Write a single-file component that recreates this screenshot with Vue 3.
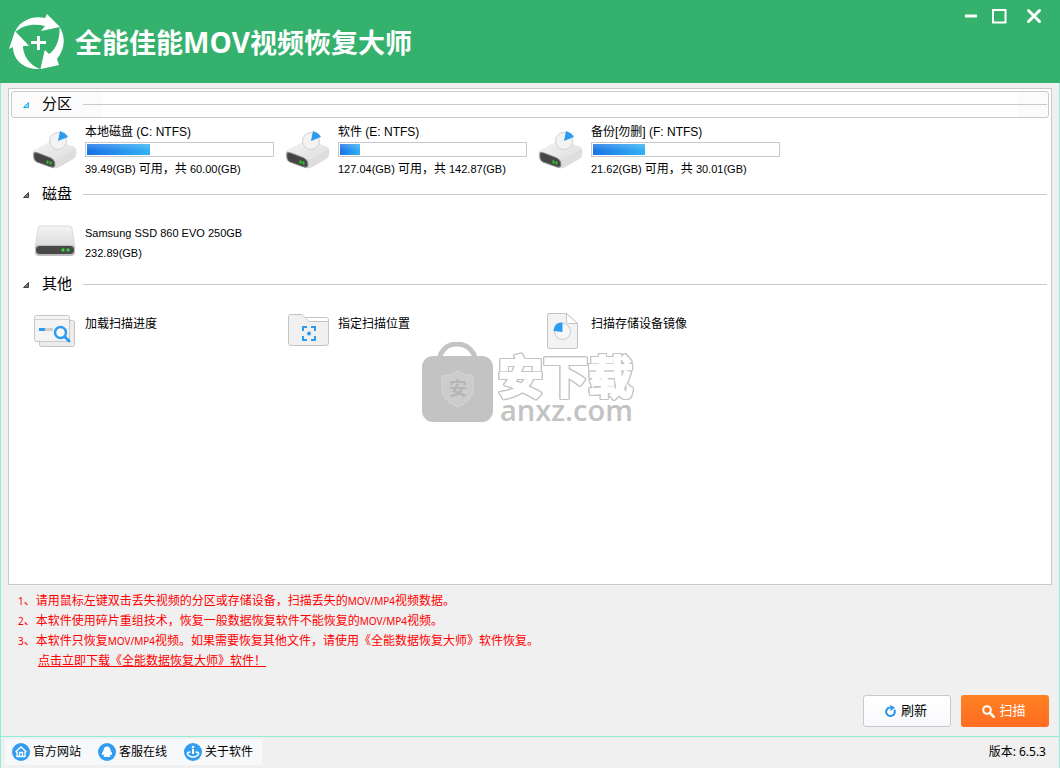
<script setup>
import { reactive } from 'vue'

const open = reactive({ partitions: true, disks: true, others: true })

const partitions = [
  { name: '本地磁盘', label: '(C: NTFS)', free: 39.49, total: 60 },
  { name: '软件', label: '(E: NTFS)', free: 127.04, total: 142.87 },
  { name: '备份[勿删]', label: '(F: NTFS)', free: 21.62, total: 30.01 },
]

const used = (p) => ((p.total - p.free) / p.total) * 100
</script>

<template>
  <div class="window">
    <header class="titlebar">
      <svg class="logo" viewBox="0 0 56 58" aria-hidden="true">
        <g fill="#fff">
          <path d="M6 19C10 9 22 2 36 5L38 1L51 14L32 18L36 13C25 10 14 12 6 19Z" />
          <path d="M50.500 14C57 24 56 36 48 46L50 52L32 56L36 37L40 41C47 36 51 27 50.500 14Z" />
          <path d="M31 56C14 57 4 46 4 34L0 36L6 18L20 33L14 33C14 42 20 52 31 56Z" />
          <path d="M28 23h3v5h6v3h-6v6h-3v-6h-6v-3h6z" />
        </g>
        <path d="M6 19L18 31M36 38L32 56" fill="none" stroke="#fff" />
      </svg>
      <h1>全能佳能<span>MOV</span>视频恢复大师</h1>
      <div class="controls">
        <button type="button" aria-label="最小化">
          <svg width="16" height="16" viewBox="0 0 16 16"><path d="M2 8h12" stroke="#fff" stroke-width="3" /></svg>
        </button>
        <button type="button" aria-label="最大化">
          <svg width="16" height="16" viewBox="0 0 16 16"><path d="M2 2h12.500v12.500h-12.500z" fill="none" stroke="#fff" stroke-width="2" /></svg>
        </button>
        <button type="button" class="close" aria-label="关闭">
          <svg width="16" height="16" viewBox="0 0 16 16"><path d="M2.500 2.500l11 11M13.500 2.500l-11 11" stroke="#fff" stroke-width="3" stroke-linecap="round" /></svg>
        </button>
      </div>
    </header>

    <main>
      <div class="panel">
        <section>
          <button type="button" class="group active" :aria-expanded="open.partitions" @click="open.partitions = !open.partitions">
            <svg class="tri" viewBox="0 0 8 8"><path d="M6.500 1.500v5h-5z" fill="#8fdcf8" stroke="#19b5ea" /></svg>
            <span>分区</span><i></i>
          </button>
          <div v-show="open.partitions" class="items">
            <button v-for="p in partitions" :key="p.label" type="button" class="item">
              <svg class="icon" viewBox="0 0 46 40" aria-hidden="true">
                <defs>
                  <linearGradient id="top" x1="0" y1="0" x2="1" y2="1"><stop offset="0" stop-color="#f5f5f5" /><stop offset="1" stop-color="#dcdcdc" /></linearGradient>
                </defs>
                <path d="M1 24Q0 22 3 20L20 11Q22 10 25 11L42 17Q45 19 44 24Q44 27 41 29L27 37Q24 39 21 38L4 32Q1 31 1 24Z" fill="#d0d0d0" />
                <path d="M3 20L20 11Q22 10 25 11L42 17Q45 19 42 21L26 30Q23 32 20 30L5 24Q1 22 3 20Z" fill="url(#top)" />
                <path d="M24 31L44 20Q45 26 41 29L27 37Q24 38 22 38Z" fill="#dedede" />
                <path d="M2 23Q3 22 6 23L19 28Q23 30 23 35Q23 38 19 37L5 32Q1 30 2 23Z" fill="#454545" stroke="#888" />
                <path d="M15.500 30.500v3M18.500 31.500v3" stroke="#2ecc28" stroke-width="2" />
                <circle cx="26" cy="11" r="8.500" fill="#f3f3f3" stroke="#d2d2d2" />
                <path d="M26 11L28 1Q34 3 36 7Z" fill="#2d9cf0" />
              </svg>
              <span class="info">
                <span class="name">{{ p.name }} {{ p.label }}</span>
                <span class="bar" role="progressbar" :aria-label="p.label" :aria-valuenow="Math.round(used(p))">
                  <span class="fill" :style="{ width: used(p) + '%' }"></span>
                </span>
                <span class="size">{{ p.free.toFixed(2) }}(GB) <b>可用，共</b> {{ p.total.toFixed(2) }}(GB)</span>
              </span>
            </button>
          </div>
        </section>

        <section>
          <button type="button" class="group" :aria-expanded="open.disks" @click="open.disks = !open.disks">
            <svg class="tri" viewBox="0 0 8 8"><path d="M6.500 1.500v5h-5z" fill="#777" stroke="#444" /></svg>
            <span>磁盘</span><i></i>
          </button>
          <div v-show="open.disks" class="items">
            <button type="button" class="item disk">
              <svg class="icon" viewBox="0 0 46 40" aria-hidden="true">
                <defs>
                  <linearGradient id="lid" x1="0" y1="0" x2="0" y2="1"><stop offset="0" stop-color="#f4f4f4" /><stop offset="1" stop-color="#d9d9d9" /></linearGradient>
                </defs>
                <path d="M6 8Q6 5 9 5H37Q40 5 40 8L43 27H3Z" fill="url(#lid)" stroke="#dadada" />
                <rect x="3" y="24" width="40" height="11" rx="4" fill="#bcbcbc" />
                <rect x="4" y="25" width="38" height="8" rx="4" fill="#484848" />
                <circle cx="31" cy="29" r="1.700" fill="#34d234" /><circle cx="36" cy="29" r="1.700" fill="#34d234" />
              </svg>
              <span class="info">
                <span class="size">Samsung SSD 860 EVO 250GB</span>
                <span class="size">232.89(GB)</span>
              </span>
            </button>
          </div>
        </section>

        <section>
          <button type="button" class="group" :aria-expanded="open.others" @click="open.others = !open.others">
            <svg class="tri" viewBox="0 0 8 8"><path d="M6.500 1.500v5h-5z" fill="#777" stroke="#444" /></svg>
            <span>其他</span><i></i>
          </button>
          <div v-show="open.others" class="items">
            <button type="button" class="item other">
              <svg class="icon" viewBox="0 0 46 40" aria-hidden="true">
                <rect x="7.500" y="9.500" width="35" height="26" rx="2" fill="#ececec" stroke="#c4c4c4" />
                <rect x="2.500" y="4.500" width="35" height="26" rx="2" fill="#f4f4f4" stroke="#c8c8c8" />
                <path d="M3 8.500h34" stroke="#d4d4d4" />
                <path d="M7 18.500h6" stroke="#2d9cf0" stroke-width="3" /><path d="M13 18.500h8" stroke="#cfcfcf" stroke-width="3" />
                <circle cx="28.500" cy="21.500" r="5.500" fill="#f8f8f8" stroke="#2d9cf0" stroke-width="2.500" />
                <path d="M33 26l4 4" stroke="#2d9cf0" stroke-width="3" stroke-linecap="round" />
              </svg>
              <span class="name">加载扫描进度</span>
            </button>
            <button type="button" class="item other">
              <svg class="icon" viewBox="0 0 46 40" aria-hidden="true">
                <path d="M3.500 6Q3.500 3.500 6 3.500H17L24 10.500H43.500V32Q43.500 34.500 41 34.500H6Q3.500 34.500 3.500 32Z" fill="#f0f0f0" stroke="#c4c4c4" />
                <path d="M20 6.500H41.500Q43.500 6.500 43.500 9V11" fill="none" stroke="#c4c4c4" />
                <path d="M18 20v-4h4M26 16h4v4M30 25v4h-4M22 29h-4v-4" fill="none" stroke="#2d9cf0" stroke-width="2" />
                <circle cx="24" cy="22.500" r="2" fill="#2d9cf0" />
              </svg>
              <span class="name">指定扫描位置</span>
            </button>
            <button type="button" class="item other">
              <svg class="icon" viewBox="0 0 46 40" aria-hidden="true">
                <path d="M9.500 4Q9.500 2.500 11 2.500H28.500L39.500 12.500V35.500Q39.500 37.500 37.500 37.500H11Q9.500 37.500 9.500 36Z" fill="#f2f2f2" stroke="#c4c4c4" />
                <path d="M28.500 2.500V10.500Q28.500 12.500 30.500 12.500H39.500Z" fill="#fff" stroke="#c4c4c4" />
                <circle cx="24.500" cy="20.500" r="8" fill="#f7f7f7" stroke="#cacaca" />
                <path d="M24.500 21V11.500Q16 11 15.500 20Z" fill="#2d9cf0" />
              </svg>
              <span class="name">扫描存储设备镜像</span>
            </button>
          </div>
        </section>

        <div class="watermark">
          <svg class="bag" viewBox="0 0 72 80" aria-hidden="true">
            <path d="M17 17C20 6 27 2 35 2S50 6 54 17" fill="none" stroke="#c3c3c3" stroke-width="5" />
            <rect x="0" y="14" width="71" height="66" rx="11" fill="#c3c3c3" />
            <path d="M36 29Q43 34 51 34V47Q51 58 36 65Q20 58 20 47V34Q28 34 36 29Z" fill="#cccccb" stroke="#d6d6d5" />
            <text x="36" y="53" text-anchor="middle" font-size="18" font-weight="700" font-family="Noto Sans CJK SC, sans-serif" fill="#b5b5b5">安</text>
          </svg>
          <span class="words"><strong>安下载</strong><em>anxz.com</em></span>
        </div>
      </div>

      <div class="notes">
        <p><small>1</small>、请用鼠标左键双击丢失视频的分区或存储设备，扫描丢失的<small>MOV/MP4</small>视频数据。</p>
        <p><small>2</small>、本软件使用碎片重组技术，恢复一般数据恢复软件不能恢复的<small>MOV/MP4</small>视频。</p>
        <p><small>3</small>、本软件只恢复<small>MOV/MP4</small>视频。如果需要恢复其他文件，请使用《全能数据恢复大师》软件恢复。</p>
        <a href="#download">点击立即下载《全能数据恢复大师》软件！</a>
      </div>

      <div class="actions">
        <button type="button" class="btn">
          <svg width="12" height="12" viewBox="0 0 12 12"><path d="M8.500 3.500A4.300 4.300 0 1 1 3.500 3.200" fill="none" stroke="#2b93ea" stroke-width="2" transform="rotate(22 6 6)" /><path d="M5 0L10 2.500L5.500 6Z" fill="#2b93ea" /></svg>
          刷新
        </button>
        <button type="button" class="btn primary">
          <svg width="13" height="13" viewBox="0 0 13 13"><circle cx="5" cy="5" r="3.800" fill="none" stroke="#fff" stroke-width="2" /><path d="M8 8l3.800 3.800" stroke="#fff" stroke-width="2.500" stroke-linecap="round" /></svg>
          扫描
        </button>
      </div>
    </main>

    <footer>
      <nav>
        <a href="#site">
          <svg width="18" height="18" viewBox="0 0 18 18"><circle cx="9" cy="9" r="9" fill="#329cf1" /><path d="M3.500 9L9 4l5.500 5M5 8.500V13.500H13V8.500M7.500 13.500V9.500h3V13.500" fill="none" stroke="#fff" stroke-width="1.300" /></svg>
          官方网站
        </a>
        <a href="#service">
          <svg width="18" height="18" viewBox="0 0 18 18"><circle cx="9" cy="9" r="9" fill="#329cf1" /><path d="M9 3.500C6.500 3.500 5.500 5.500 5.500 7.500C4.500 9 3.500 10.500 4 12L5.500 11.500L6.200 12.500L5.500 14H8.500L9 13.500L9.500 14H12.500L11.800 12.500L12.500 11.500L14 12C14.500 10.500 13.500 9 12.500 7.500C12.500 5.500 11.500 3.500 9 3.500Z" fill="#fff" /></svg>
          客服在线
        </a>
        <a href="#about">
          <svg width="18" height="18" viewBox="0 0 18 18"><circle cx="9" cy="9" r="9" fill="#329cf1" /><circle cx="9" cy="4" r="1.300" fill="#fff" /><path d="M9 6v5" stroke="#fff" stroke-width="2" /><path d="M6.500 9Q3 9 3.500 11Q5 14 9 14T14.500 11Q15 9 11.500 9" fill="none" stroke="#fff" stroke-width="1.600" /></svg>
          关于软件
        </a>
      </nav>
      <span>版本: 6.5.3</span>
    </footer>
  </div>
</template>

<style>
body {
  margin: 0;
  background: #f0f0f0;
}
</style>

<style scoped>
* {
  box-sizing: border-box;
}
.window {
  display: flex;
  flex-direction: column;
  min-height: 100vh;
  font: 12px/20px "Liberation Sans", "Noto Sans CJK SC", sans-serif;
  color: #000;
  background: #f0f0f0;
}
button {
  font: inherit;
  color: inherit;
  padding: 0;
  border: 0;
  background: none;
  text-align: left;
}
.titlebar {
  display: flex;
  align-items: center;
  height: 83px;
  padding: 0 9px;
  background: #34b16c;
}
.logo {
  width: 56px;
  height: 58px;
}
h1 {
  flex: 1;
  margin: 0 0 0 10px;
  font: 700 27px/40px "Noto Sans CJK SC", sans-serif;
  color: #fff;
  white-space: nowrap;
}
h1 span {
  font-family: "Open Sans", sans-serif;
  font-size: 28px;
}
.controls {
  display: flex;
  align-self: flex-start;
  gap: 12px;
  padding: 8px 9px 0 0;
}
.controls button {
  width: 16px;
  height: 16px;
}
.controls .close {
  margin-left: 7px;
}
.controls svg {
  display: block;
}
main {
  flex: 1;
  display: flex;
  flex-direction: column;
  padding: 5px 7px 9px;
  border: 1px solid #8eefd5;
  border-top: 0;
}
.panel {
  position: relative;
  flex: 1;
  padding: 2px;
  border: 1px solid #c8c9cc;
  background: #fff;
}
section {
  min-height: 90px;
}
.group {
  display: flex;
  align-items: center;
  width: 100%;
  height: 27px;
  padding: 0 1px 0 10px;
  border: 1px solid transparent;
  border-radius: 3px;
}
.group.active {
  border-color: #c8c9cc;
  background: linear-gradient(90deg, #fbfbfb 90px, #fff 90px, #fff calc(100% - 30px), #fbfbfb calc(100% - 30px));
}
.group span {
  margin: 0 11px 0 12px;
  padding-bottom: 2px;
  font-size: 15px;
}
.group i {
  flex: 1;
  height: 1px;
  background: #c8c9cc;
}
.tri {
  width: 8px;
  height: 8px;
}
.items {
  display: flex;
  flex-wrap: wrap;
  padding-left: 21px;
}
.item {
  display: flex;
  align-items: flex-start;
  width: 253px;
  height: 63px;
}
.icon {
  flex: none;
  width: 46px;
  height: 40px;
  margin: 12px 7px 0 0;
}
.info {
  display: flex;
  flex-direction: column;
  padding-top: 4px;
}
.name {
  font-size: 12px;
  white-space: nowrap;
}
.bar {
  width: 189px;
  height: 15px;
  padding: 1px;
  border: 1px solid #c8c9cc;
  background: #fff;
}
.fill {
  display: block;
  height: 100%;
  background: linear-gradient(180deg, rgba(255, 255, 255, 0.2), rgba(255, 255, 255, 0) 60%), linear-gradient(90deg, #1a73e6, #33b2f5);
}
.size {
  font-size: 11px;
  white-space: nowrap;
}
.bar + .size {
  margin-top: 2px;
}
.size b {
  font-size: 12px;
  font-weight: 400;
}
.disk .info {
  padding-top: 15px;
}
.other .name {
  padding-top: 16px;
}
.disk .icon,
.other .icon {
  margin-top: 13px;
}
.watermark {
  position: absolute;
  left: 413px;
  top: 253px;
  display: flex;
  gap: 4px;
  color: #c3c3c3;
  pointer-events: none;
}
.bag {
  width: 72px;
  height: 80px;
}
.words {
  display: flex;
  flex-direction: column;
  padding-top: 13px;
}
.words strong {
  font: 700 45px/40px "Noto Sans CJK SC", sans-serif;
  color: #fff;
  -webkit-text-stroke: 2px #fff;
  filter: drop-shadow(1px 0 #c3c3c3) drop-shadow(-1px 0 #c3c3c3) drop-shadow(0 1px #c3c3c3) drop-shadow(0 -1px #c3c3c3);
}
.words em {
  padding: 5px 0 0 2px;
  font: normal 600 29px/20px "Open Sans", sans-serif;
}
.notes {
  margin-top: 6px;
  padding-left: 10px;
  color: #f00;
}
.notes p {
  margin: 0;
}
.notes small {
  font-family: "Noto Sans", sans-serif;
  font-size: 10px;
}
.notes a {
  display: inline-block;
  margin-left: 20px;
  color: inherit;
}
.actions {
  display: flex;
  justify-content: flex-end;
  gap: 10px;
  margin-top: 24px;
  padding-right: 3px;
}
.btn {
  display: flex;
  align-items: center;
  justify-content: center;
  gap: 4px;
  width: 88px;
  height: 32px;
  padding-right: 2px;
  border: 1px solid #c8c9cc;
  border-radius: 3px;
  background: linear-gradient(#fff, #f8f9fb);
  font-size: 13px;
}
.btn.primary {
  border: 0;
  color: #fff;
  background: linear-gradient(#ff8322, #ff6b22);
}
footer {
  display: flex;
  align-items: center;
  justify-content: space-between;
  height: 31px;
  padding: 0 13px 2px 4px;
  border: 1px solid #8eefd5;
  border-width: 0 1px;
  font-family: "Noto Sans", "Noto Sans CJK SC", sans-serif;
}
nav {
  display: flex;
  gap: 17px;
  height: 26px;
  padding: 0 9px 0 7px;
  background: #f6f8fa;
}
nav a {
  display: flex;
  align-items: center;
  gap: 3px;
  color: inherit;
  text-decoration: none;
}
</style>
